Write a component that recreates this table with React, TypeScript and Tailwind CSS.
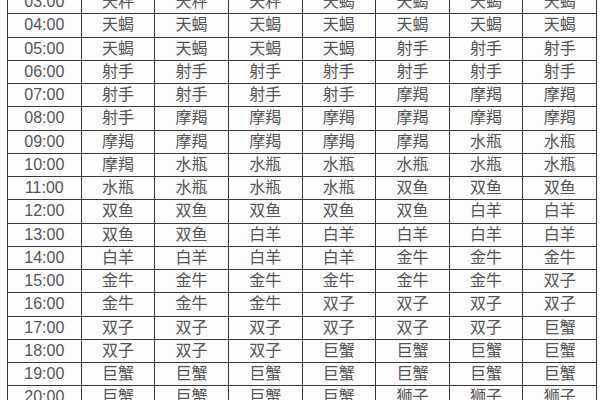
const ROWS: [string, string[]][] = [
  ["03:00", ["天秤", "天秤", "天秤", "天蝎", "天蝎", "天蝎", "天蝎"]],
  ["04:00", ["天蝎", "天蝎", "天蝎", "天蝎", "天蝎", "天蝎", "天蝎"]],
  ["05:00", ["天蝎", "天蝎", "天蝎", "天蝎", "射手", "射手", "射手"]],
  ["06:00", ["射手", "射手", "射手", "射手", "射手", "射手", "射手"]],
  ["07:00", ["射手", "射手", "射手", "射手", "摩羯", "摩羯", "摩羯"]],
  ["08:00", ["射手", "摩羯", "摩羯", "摩羯", "摩羯", "摩羯", "摩羯"]],
  ["09:00", ["摩羯", "摩羯", "摩羯", "摩羯", "摩羯", "水瓶", "水瓶"]],
  ["10:00", ["摩羯", "水瓶", "水瓶", "水瓶", "水瓶", "水瓶", "水瓶"]],
  ["11:00", ["水瓶", "水瓶", "水瓶", "水瓶", "双鱼", "双鱼", "双鱼"]],
  ["12:00", ["双鱼", "双鱼", "双鱼", "双鱼", "双鱼", "白羊", "白羊"]],
  ["13:00", ["双鱼", "双鱼", "白羊", "白羊", "白羊", "白羊", "白羊"]],
  ["14:00", ["白羊", "白羊", "白羊", "白羊", "金牛", "金牛", "金牛"]],
  ["15:00", ["金牛", "金牛", "金牛", "金牛", "金牛", "金牛", "双子"]],
  ["16:00", ["金牛", "金牛", "金牛", "双子", "双子", "双子", "双子"]],
  ["17:00", ["双子", "双子", "双子", "双子", "双子", "双子", "巨蟹"]],
  ["18:00", ["双子", "双子", "双子", "巨蟹", "巨蟹", "巨蟹", "巨蟹"]],
  ["19:00", ["巨蟹", "巨蟹", "巨蟹", "巨蟹", "巨蟹", "巨蟹", "巨蟹"]],
  ["20:00", ["巨蟹", "巨蟹", "巨蟹", "巨蟹", "狮子", "狮子", "狮子"]],
];

export default function App() {
  return (
    <div
      className="w-[600px] h-[400px] overflow-hidden bg-[#fdfdfd] text-[#555]"
      style={{ fontFamily: '"Liberation Sans", "Noto Sans CJK SC", sans-serif' }}
    >
      <table className="ml-[7px] mt-[-10px] w-[590px] table-fixed border-collapse text-[16px] leading-none">
        <tbody>
          {ROWS.map(([time, signs]) => (
            <tr key={time} className="h-[23.25px]">
              <td className="border-[1.5px] border-[#3a3a3a] text-center">{time}</td>
              {signs.map((s, i) => (
                <td key={i} className="border-[1.5px] border-[#3a3a3a] text-center">
                  {s}
                </td>
              ))}
            </tr>
          ))}
        </tbody>
      </table>
    </div>
  );
}
